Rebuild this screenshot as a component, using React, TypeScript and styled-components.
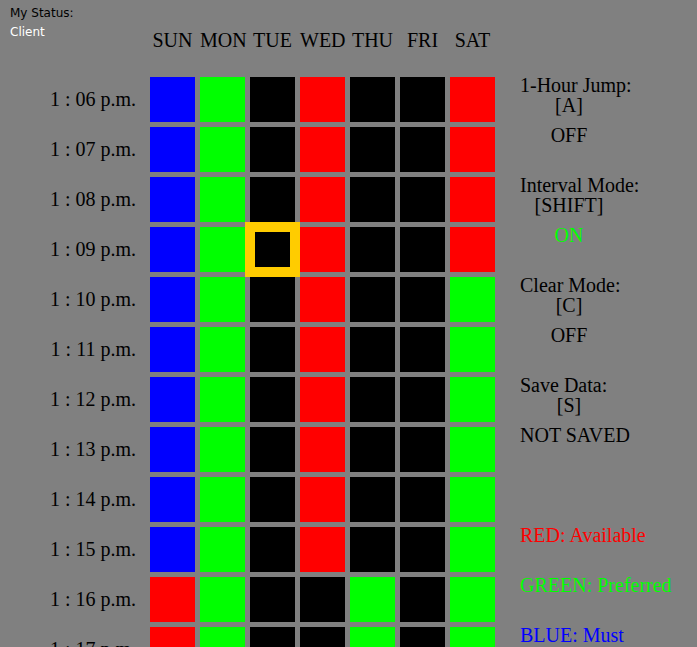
import styled, { createGlobalStyle } from 'styled-components';

const GlobalStyle = createGlobalStyle`
    body {
        margin: 0;
        background-color: #808080;
        overflow: hidden;
    }
`;

const Page = styled.div`
    display: flex;
    font-family: "Liberation Serif", "Times New Roman", serif;
    font-size: 20px;
    color: #000;
`;

const LeftCol = styled.div`
    width: 150px;
    display: flex;
    flex-direction: column;
`;

const Status = styled.div`
    height: 77px;
    box-sizing: border-box;
    padding: 4px 0 0 10px;
    font-family: "DejaVu Sans", sans-serif;
    font-size: 12px;
    line-height: 19px;
`;

const StatusValue = styled.div`
    color: #fff;
`;

const TimeList = styled.div`
    display: flex;
    flex-direction: column;
    gap: 5px;
`;

const TimeLabel = styled.div`
    height: 45px;
    line-height: 45px;
    text-align: right;
    padding-right: 14px;
    white-space: nowrap;
`;

const Board = styled.div`
    display: flex;
    flex-direction: column;
`;

const DayRow = styled.div`
    height: 77px;
    display: flex;
    gap: 5px;
`;

const DayLabel = styled.div`
    width: 45px;
    padding-top: 30px;
    line-height: 20px;
    text-align: center;
    white-space: nowrap;
`;

const Grid = styled.div`
    display: grid;
    grid-template-columns: repeat(7, 45px);
    grid-auto-rows: 45px;
    gap: 5px;
`;

const Cell = styled.div<{ $color: string; $selected?: boolean }>`
    background-color: ${(p) => p.$color};
    position: relative;
    z-index: ${(p) => (p.$selected ? 1 : 0)};
    outline: ${(p) => (p.$selected ? '10px solid #ffcc00' : 'none')};
    outline-offset: -5px;
`;

const Side = styled.div`
    margin-left: 25px;
    padding-top: 75px;
    display: flex;
    flex-direction: column;
    line-height: 20px;
    white-space: nowrap;
`;

const Setting = styled.div`
    margin-bottom: 30px;
`;

const Centered = styled.div<{ $color?: string; $gap?: number }>`
    width: 98px;
    text-align: center;
    margin-top: ${(p) => p.$gap ?? 0}px;
    color: ${(p) => p.$color ?? '#000'};
`;

const Legend = styled.div`
    margin-top: 50px;
    display: flex;
    flex-direction: column;
    gap: 30px;
`;

const LegendItem = styled.div<{ $color: string }>`
    color: ${(p) => p.$color};
`;

const B = '#0000ff';
const G = '#00ff00';
const R = '#ff0000';
const K = '#000000';

const days = ['SUN', 'MON', 'TUE', 'WED', 'THU', 'FRI', 'SAT'];

const rows: string[][] = [
    [B, G, K, R, K, K, R],
    [B, G, K, R, K, K, R],
    [B, G, K, R, K, K, R],
    [B, G, K, R, K, K, R],
    [B, G, K, R, K, K, G],
    [B, G, K, R, K, K, G],
    [B, G, K, R, K, K, G],
    [B, G, K, R, K, K, G],
    [B, G, K, R, K, K, G],
    [B, G, K, R, K, K, G],
    [R, G, K, K, G, K, G],
    [R, G, K, K, G, K, G],
];

const settings = [
    { title: '1-Hour Jump:', key: '[A]', state: 'OFF', color: '#000' },
    { title: 'Interval Mode:', key: '[SHIFT]', state: 'ON', color: '#00ff00' },
    { title: 'Clear Mode:', key: '[C]', state: 'OFF', color: '#000' },
    { title: 'Save Data:', key: '[S]', state: 'NOT SAVED', color: '#000' },
];

// selected cell: 1:09 p.m. on TUE
const selRow = 3;
const selCol = 2;

export default function App() {
    return (
        <>
            <GlobalStyle />
            <Page>
                <LeftCol>
                    <Status>
                        <div>My Status:</div>
                        <StatusValue>Client</StatusValue>
                    </Status>
                    <TimeList>
                        {rows.map((_, i) => (
                            <TimeLabel key={i}>1 : {String(6 + i).padStart(2, '0')} p.m.</TimeLabel>
                        ))}
                    </TimeList>
                </LeftCol>
                <Board>
                    <DayRow>
                        {days.map((d) => (
                            <DayLabel key={d}>{d}</DayLabel>
                        ))}
                    </DayRow>
                    <Grid>
                        {rows.map((row, r) =>
                            row.map((c, i) => (
                                <Cell key={`${r}-${i}`} $color={c} $selected={r === selRow && i === selCol} />
                            ))
                        )}
                    </Grid>
                </Board>
                <Side>
                    {settings.map((s) => (
                        <Setting key={s.title}>
                            <div>{s.title}</div>
                            <Centered>{s.key}</Centered>
                            <Centered $gap={10} $color={s.color}>{s.state}</Centered>
                        </Setting>
                    ))}
                    <Legend>
                        <LegendItem $color="#ff0000">RED: Available</LegendItem>
                        <LegendItem $color="#00ff00">GREEN: Preferred</LegendItem>
                        <LegendItem $color="#0000ff">BLUE: Must</LegendItem>
                    </Legend>
                </Side>
            </Page>
        </>
    );
}
